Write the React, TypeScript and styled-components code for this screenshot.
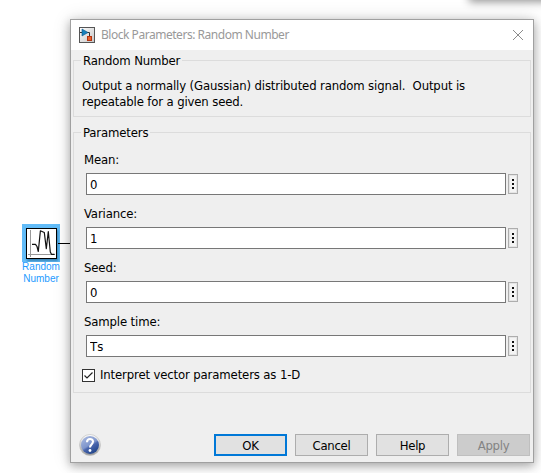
import React from "react";
import styled, { createGlobalStyle } from "styled-components";

const GlobalStyle = createGlobalStyle`
  * { box-sizing: border-box; }
  html, body { margin: 0; padding: 0; background: #fff; overflow: hidden; }
  svg { display: block; flex: none; }
`;

const Canvas = styled.main`
  position: relative;
  display: flex;
  align-items: flex-start;
  width: 541px;
  height: 473px;
  overflow: hidden;
  background: #fff;
  color: #000;
  font: 13px/16px "DejaVu Sans Condensed", "DejaVu Sans", sans-serif;
  font-stretch: condensed;
  letter-spacing: -0.14px;
`;

const NeighbourShadow = styled.div`
  position: absolute;
  left: 470px;
  top: -13px;
  width: 90px;
  height: 12px;
  box-shadow: 0 2px 9px 1px rgba(0, 0, 0, 0.42);
`;

const BlockColumn = styled.section`
  display: grid;
  grid-template-columns: 38px 10px;
  width: 48px;
  margin: 224px 0 0 22px;
`;

const BlockHighlight = styled.div`
  width: 38px;
  height: 38px;
  background: #62bcf8;
`;

const Wire = styled.div`
  width: 12px;
  height: 1px;
  margin: 19px 0 0 -2px;
  background: #000;
`;

const BlockName = styled.div`
  width: 38px;
  margin-top: -1px;
  font: 10px/12px "Liberation Sans", Arial, sans-serif;
  letter-spacing: 0;
  color: #1e9bff;
  text-align: center;
  white-space: nowrap;
`;

const Dialog = styled.section`
  position: relative;
  display: flex;
  flex-direction: column;
  flex: none;
  width: 464px;
  height: 444px;
  margin-top: 19px;
  border: 1px solid #a0a0a0;
  background: #efefef;
  box-shadow: 0 3px 9px rgba(0, 0, 0, 0.3), 0 0 18px rgba(0, 0, 0, 0.12);
`;

const TitleBar = styled.header`
  display: flex;
  align-items: center;
  height: 30px;
  flex: none;
  padding: 0 10px 0 8px;
  background: #fff;
`;

const Title = styled.h1`
  flex: 1;
  margin: 0 0 0 6px;
  font: 400 12px/16px "Noto Sans", "Open Sans", sans-serif;
  letter-spacing: -0.47px;
  color: #999;
`;

const Text = styled.span`
  white-space: pre;
`;

const Group = styled.fieldset<{ $height: number; $gap: number }>`
  width: 458px;
  height: ${(p) => p.$height}px;
  min-width: 0;
  margin: ${(p) => p.$gap}px 0 0 2px;
  padding: 0 8px;
  border: 1px solid #dcdcdc;
`;

const Legend = styled.legend`
  height: 16px;
  margin-left: -1px;
  padding: 1px 2px 0;
`;

const Description = styled.p`
  margin: 10px 0 0;
  display: flex;
  flex-direction: column;
`;

const FieldList = styled.div`
  padding-top: 12px;
`;

const Field = styled.label`
  display: flex;
  flex-direction: column;
  height: 54px;
  padding-left: 2px;
`;

const FieldRow = styled.div`
  display: flex;
  align-items: center;
  gap: 2px;
  margin: 5px 0 0 2px;
`;

const Input = styled.input`
  width: 420px;
  height: 22px;
  padding: 1px 3px 0;
  border: 1px solid #777;
  border-radius: 0;
  background: #fff;
  color: #000;
  font: inherit;
  letter-spacing: 0.1px;
  font-kerning: none;
  outline: none;
`;

const MoreButton = styled.button`
  display: flex;
  flex-direction: column;
  align-items: center;
  justify-content: center;
  gap: 2px;
  width: 10px;
  height: 20px;
  padding: 0;
  border: 1px solid #adadad;
  background: #f4f4f4;
  box-shadow: inset 0 0 0 1px #e5e5e5;
`;

const Dot = styled.i`
  width: 2px;
  height: 2px;
  background: #111;
`;

const CheckRow = styled.div`
  display: flex;
  align-items: center;
  gap: 5px;
  margin-top: -1px;
`;

const CheckBox = styled.span`
  width: 13px;
  height: 13px;
  border: 1px solid #333;
  background: #fff;
`;

const Footer = styled.footer`
  display: flex;
  align-items: center;
  gap: 8px;
  height: 22px;
  margin: 41px 3px 0 8px;
`;

const Spacer = styled.div`
  flex: 1;
`;

const Button = styled.button<{ $primary?: boolean }>`
  width: 73px;
  height: 22px;
  padding: 1px 0 0;
  border: ${(p) => (p.$primary ? "2px solid #0078d7" : "1px solid #adadad")};
  border-radius: 0;
  background: #e1e1e1;
  color: #000;
  font: inherit;
  letter-spacing: -0.3px;
  line-height: 16px;
  &:disabled {
    border-color: #bfbfbf;
    background: #ccc;
    color: #838383;
  }
`;

const fields = [
  { label: "Mean:", value: "0" },
  { label: "Variance:", value: "1" },
  { label: "Seed:", value: "0" },
  { label: "Sample time:", value: "Ts" },
];

function SignalIcon() {
  return (
    <svg width="38" height="38" viewBox="0 0 38 38">
      <defs>
        <filter id="soft" x="-20%" y="-20%" width="150%" height="150%">
          <feGaussianBlur stdDeviation="1" />
        </filter>
      </defs>
      <rect x="5" y="6" width="31" height="31" fill="#286d9d" opacity=".7" filter="url(#soft)" />
      <rect x="4.5" y="4.5" width="30" height="30" fill="#fff" stroke="#000" />
      <path d="M8.5 6v27M6 30.5h27" stroke="#999" fill="none" />
      <path d="M10 20.300H13.500L15 22.500L16.300 27.500L18.400 6.800L22.300 8.500L24.300 24.700L26.300 7.500L28.300 28L29.500 30.300H32.500" stroke="#111" strokeWidth="1.200" strokeLinejoin="round" fill="none" />
    </svg>
  );
}

function SimulinkIcon() {
  return (
    <svg width="16" height="16" viewBox="0 0 16 16">
      <defs>
        <linearGradient id="page" x1="0" y1="0" x2="1" y2="1">
          <stop stopColor="#fff" />
          <stop offset="1" stopColor="#c5c5c5" />
        </linearGradient>
      </defs>
      <rect x=".5" y=".5" width="15" height="15" fill="url(#page)" stroke="#555" />
      <path d="M1 5.500h2M8 5.500h2.500V9" stroke="#333" fill="none" />
      <path d="M3 2l6 3.500-6 3.500z" fill="#1782bd" stroke="#0b5688" strokeWidth=".6" />
      <rect x="8.500" y="9.500" width="4" height="4" fill="#eb622c" stroke="#b63410" />
    </svg>
  );
}

function HelpIcon() {
  return (
    <svg width="22" height="22" viewBox="0 0 22 22">
      <defs>
        <linearGradient id="ball" x1=".2" y1=".1" x2=".7" y2=".9">
          <stop stopColor="#a0b2dc" />
          <stop offset=".5" stopColor="#7f96cc" />
          <stop offset=".62" stopColor="#4a66ad" />
          <stop offset="1" stopColor="#26498f" />
        </linearGradient>
        <linearGradient id="rim" x1="0" y1="0" x2="0" y2="1">
          <stop stopColor="#fff" />
          <stop offset="1" stopColor="#999" />
        </linearGradient>
      </defs>
      <circle cx="11" cy="11" r="10.500" fill="url(#rim)" stroke="#bbb" strokeWidth=".6" />
      <circle cx="11" cy="11" r="9" fill="url(#ball)" />
      <path d="M8 8.300C8 3.800 14 4.200 14 7.500c0 3-3 2.800-3 6" fill="none" stroke="#fff" strokeWidth="2.100" />
      <circle cx="11" cy="16.500" r="1.400" fill="#fff" />
    </svg>
  );
}

export default function App() {
  return (
    <Canvas>
      <GlobalStyle />
      <NeighbourShadow />
      <BlockColumn>
        <BlockHighlight><SignalIcon /></BlockHighlight>
        <Wire />
        <BlockName>Random<br />Number</BlockName>
      </BlockColumn>
      <Dialog>
        <TitleBar>
          <SimulinkIcon />
          <Title>Block Parameters: Random Number</Title>
          <svg width="10" height="10" viewBox="0 0 10 10">
            <path d="M0 0l10 10M10 0L0 10" stroke="#8b8b8b" fill="none" />
          </svg>
        </TitleBar>
        <Group $height={65} $gap={2}>
          <Legend><Text>Random Number</Text></Legend>
          <Description>
            <Text>Output a normally (Gaussian) distributed random signal.  Output is</Text>
            <Text>repeatable for a given seed.</Text>
          </Description>
        </Group>
        <Group $height={269} $gap={7}>
          <Legend><Text>Parameters</Text></Legend>
          <FieldList>
            {fields.map((f) => (
              <Field key={f.label}>
                <Text>{f.label}</Text>
                <FieldRow>
                  <Input defaultValue={f.value} />
                  <MoreButton><Dot /><Dot /><Dot /></MoreButton>
                </FieldRow>
              </Field>
            ))}
          </FieldList>
          <CheckRow>
            <CheckBox>
              <svg width="11" height="11" viewBox="0 0 11 11">
                <path d="M1.500 5.500l2.500 2.500 5.500-5.500" stroke="#222" strokeWidth="1.200" fill="none" />
              </svg>
            </CheckBox>
            <Text>Interpret vector parameters as 1-D</Text>
          </CheckRow>
        </Group>
        <Footer>
          <HelpIcon />
          <Spacer />
          <Button $primary>OK</Button>
          <Button>Cancel</Button>
          <Button>Help</Button>
          <Button disabled>Apply</Button>
        </Footer>
      </Dialog>
    </Canvas>
  );
}
